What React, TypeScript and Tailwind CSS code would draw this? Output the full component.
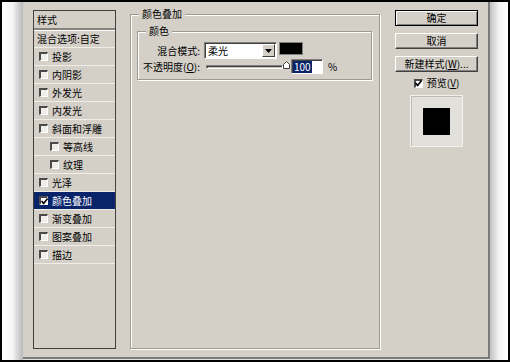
import type { ReactNode } from "react";

type StyleItem = { label: string; box: boolean; indent?: boolean; checked?: boolean };

const STYLE_ITEMS: StyleItem[] = [
  { label: "混合选项:自定", box: false },
  { label: "投影", box: true },
  { label: "内阴影", box: true },
  { label: "外发光", box: true },
  { label: "内发光", box: true },
  { label: "斜面和浮雕", box: true },
  { label: "等高线", box: true, indent: true },
  { label: "纹理", box: true, indent: true },
  { label: "光泽", box: true },
  { label: "颜色叠加", box: true, checked: true },
  { label: "渐变叠加", box: true },
  { label: "图案叠加", box: true },
  { label: "描边", box: true },
];

function CheckBox({ checked = false, white = false }: { checked?: boolean; white?: boolean }) {
  return (
    <span
      className={`inline-flex h-[9px] w-[9px] shrink-0 items-center justify-center border-b border-l-2 border-r border-t-2 border-b-white border-l-[#4a4a4a] border-r-white border-t-[#4a4a4a] ${
        white ? "bg-white" : "bg-[#efeee9]"
      }`}
    >
      {checked && (
        <svg width="7" height="7" viewBox="0 0 7 7" className="overflow-visible">
          <polyline points="0.5,3 2.6,5.4 6.6,0.6" fill="none" stroke="#000" strokeWidth="1.6" />
        </svg>
      )}
    </span>
  );
}

function Button({ children, primary = false }: { children: ReactNode; primary?: boolean }) {
  return (
    <div
      className={`flex h-[16px] w-[83px] items-center justify-center whitespace-nowrap ${
        primary
          ? "border border-black shadow-[inset_1px_1px_0_#fff,inset_-1px_-1px_0_#808080]"
          : "border border-b-[#404040] border-l-white border-r-[#404040] border-t-white shadow-[inset_-1px_-1px_0_#808080]"
      }`}
    >
      {children}
    </div>
  );
}

export default function App() {
  return (
    <div className="flex h-[362px] w-[510px] border-2 border-black bg-white font-['Noto_Sans_CJK_SC','Liberation_Sans',sans-serif] text-[10px] leading-[14px] whitespace-nowrap text-black">
      {/* left shadow */}
      <div className="w-[21px] bg-linear-to-r from-white via-[#f5f5f5] to-[#b8b8b8]" />

      <div className="flex w-[467px] flex-col">
        <div className="flex h-[357px] items-start border-b-2 border-r-2 border-[#7b7b7b] bg-[#d4d0c8] pl-[10px]">
          {/* style list */}
          <div className="mt-[8px] flex h-[339px] w-[83px] flex-col border border-[#404040]">
            <div className="flex h-[19px] items-center border-b-2 border-[#86837c] pl-[3px] shadow-[0_1px_0_#fff]">
              样式
            </div>
            {STYLE_ITEMS.map((item) => (
              <div
                key={item.label}
                className={`flex h-[18px] shrink-0 items-center border-b border-[#eeede8] ${
                  item.checked ? "bg-[#0a246a] text-white" : ""
                } ${item.indent ? "pl-[16px]" : item.box ? "pl-[5px]" : "pl-[3px]"}`}
              >
                {item.box && (
                  <span className="mr-[4px] flex">
                    <CheckBox checked={item.checked} white={item.checked} />
                  </span>
                )}
                {item.label}
              </div>
            ))}
          </div>

          {/* color overlay group */}
          <fieldset className="ml-[14px] mt-[5px] h-[342px] w-[250px] border border-[#9c9990] px-[6px] pt-[3px] shadow-[inset_1px_1px_0_#fff,1px_1px_0_#fff]">
            <legend className="ml-[2px] bg-[#d4d0c8] px-[3px]">颜色叠加</legend>
            <fieldset className="w-[235px] border border-[#9c9990] pb-[5px] pt-[4px] shadow-[inset_1px_1px_0_#fff,1px_1px_0_#fff]">
              <legend className="ml-[8px] bg-[#d4d0c8] px-[3px]">颜色</legend>
              <div className="flex h-[17px] items-center">
                <span className="flex w-[62px] justify-end">混合模式:</span>
                <div className="ml-[4px] flex h-[17px] w-[73px] items-center justify-between border border-b-white border-l-[#808080] border-r-white border-t-[#808080] bg-white pl-[3px] pr-px shadow-[inset_1px_1px_0_#404040]">
                  <span>柔光</span>
                  <span className="flex h-[13px] w-[13px] items-center justify-center border border-b-[#404040] border-l-white border-r-[#404040] border-t-white bg-[#d4d0c8]">
                    <svg width="7" height="4" viewBox="0 0 7 4">
                      <polygon points="0,0 7,0 3.5,4" fill="#000" />
                    </svg>
                  </span>
                </div>
                <div className="ml-[2px] h-[13px] w-[24px] self-start border border-[#808080] bg-black" />
              </div>
              <div className="flex h-[15px] items-center">
                <span className="flex w-[62px] justify-end">
                  不透明度(<span className="underline">O</span>):
                </span>
                <div className="ml-[6px] flex w-[84px] items-center">
                  <div className="h-[4px] flex-1 border border-b-white border-l-[#808080] border-r-white border-t-[#808080] bg-[#c8c5bd] shadow-[inset_1px_1px_0_#404040]" />
                  <svg width="7" height="8" viewBox="0 0 7 8" className="-mt-[3px]">
                    <polygon points="0.5,7.5 0.5,3.5 3.5,0.5 6.5,3.5 6.5,7.5" fill="#fff" stroke="#404040" strokeWidth="1" />
                  </svg>
                </div>
                <div className="ml-px flex h-[15px] w-[32px] items-center border border-b-white border-l-[#808080] border-r-white border-t-[#808080] bg-white pl-px shadow-[inset_1px_1px_0_#404040]">
                  <span className="bg-[#0a246a] px-px leading-[12px] text-white">100</span>
                </div>
                <span className="ml-[5px]">%</span>
              </div>
            </fieldset>
          </fieldset>

          {/* buttons */}
          <div className="ml-[15px] mt-[8px] flex w-[83px] flex-col items-center">
            <Button primary>确定</Button>
            <div className="h-[7px]" />
            <Button>取消</Button>
            <div className="h-[7px]" />
            <Button>
              新建样式(<span className="underline">W</span>)...
            </Button>
            <div className="mt-[4px] flex h-[14px] items-center gap-[4px]">
              <CheckBox checked white />
              <span>
                预览(<span className="underline">V</span>)
              </span>
            </div>
            <div className="mt-[5px] flex h-[52px] w-[53px] items-center justify-center border border-[#f2f1ed] bg-[#e2e0db] shadow-[inset_1px_1px_0_#bebbb4]">
              <div className="h-[27px] w-[27px] bg-black" />
            </div>
          </div>
        </div>
        <div className="flex-1 bg-linear-to-b from-[#c4c4c4] to-white" />
      </div>

      {/* right shadow */}
      <div className="flex-1 bg-linear-to-r from-[#c2c2c2] via-[#f3f3f3] to-white" />
    </div>
  );
}
